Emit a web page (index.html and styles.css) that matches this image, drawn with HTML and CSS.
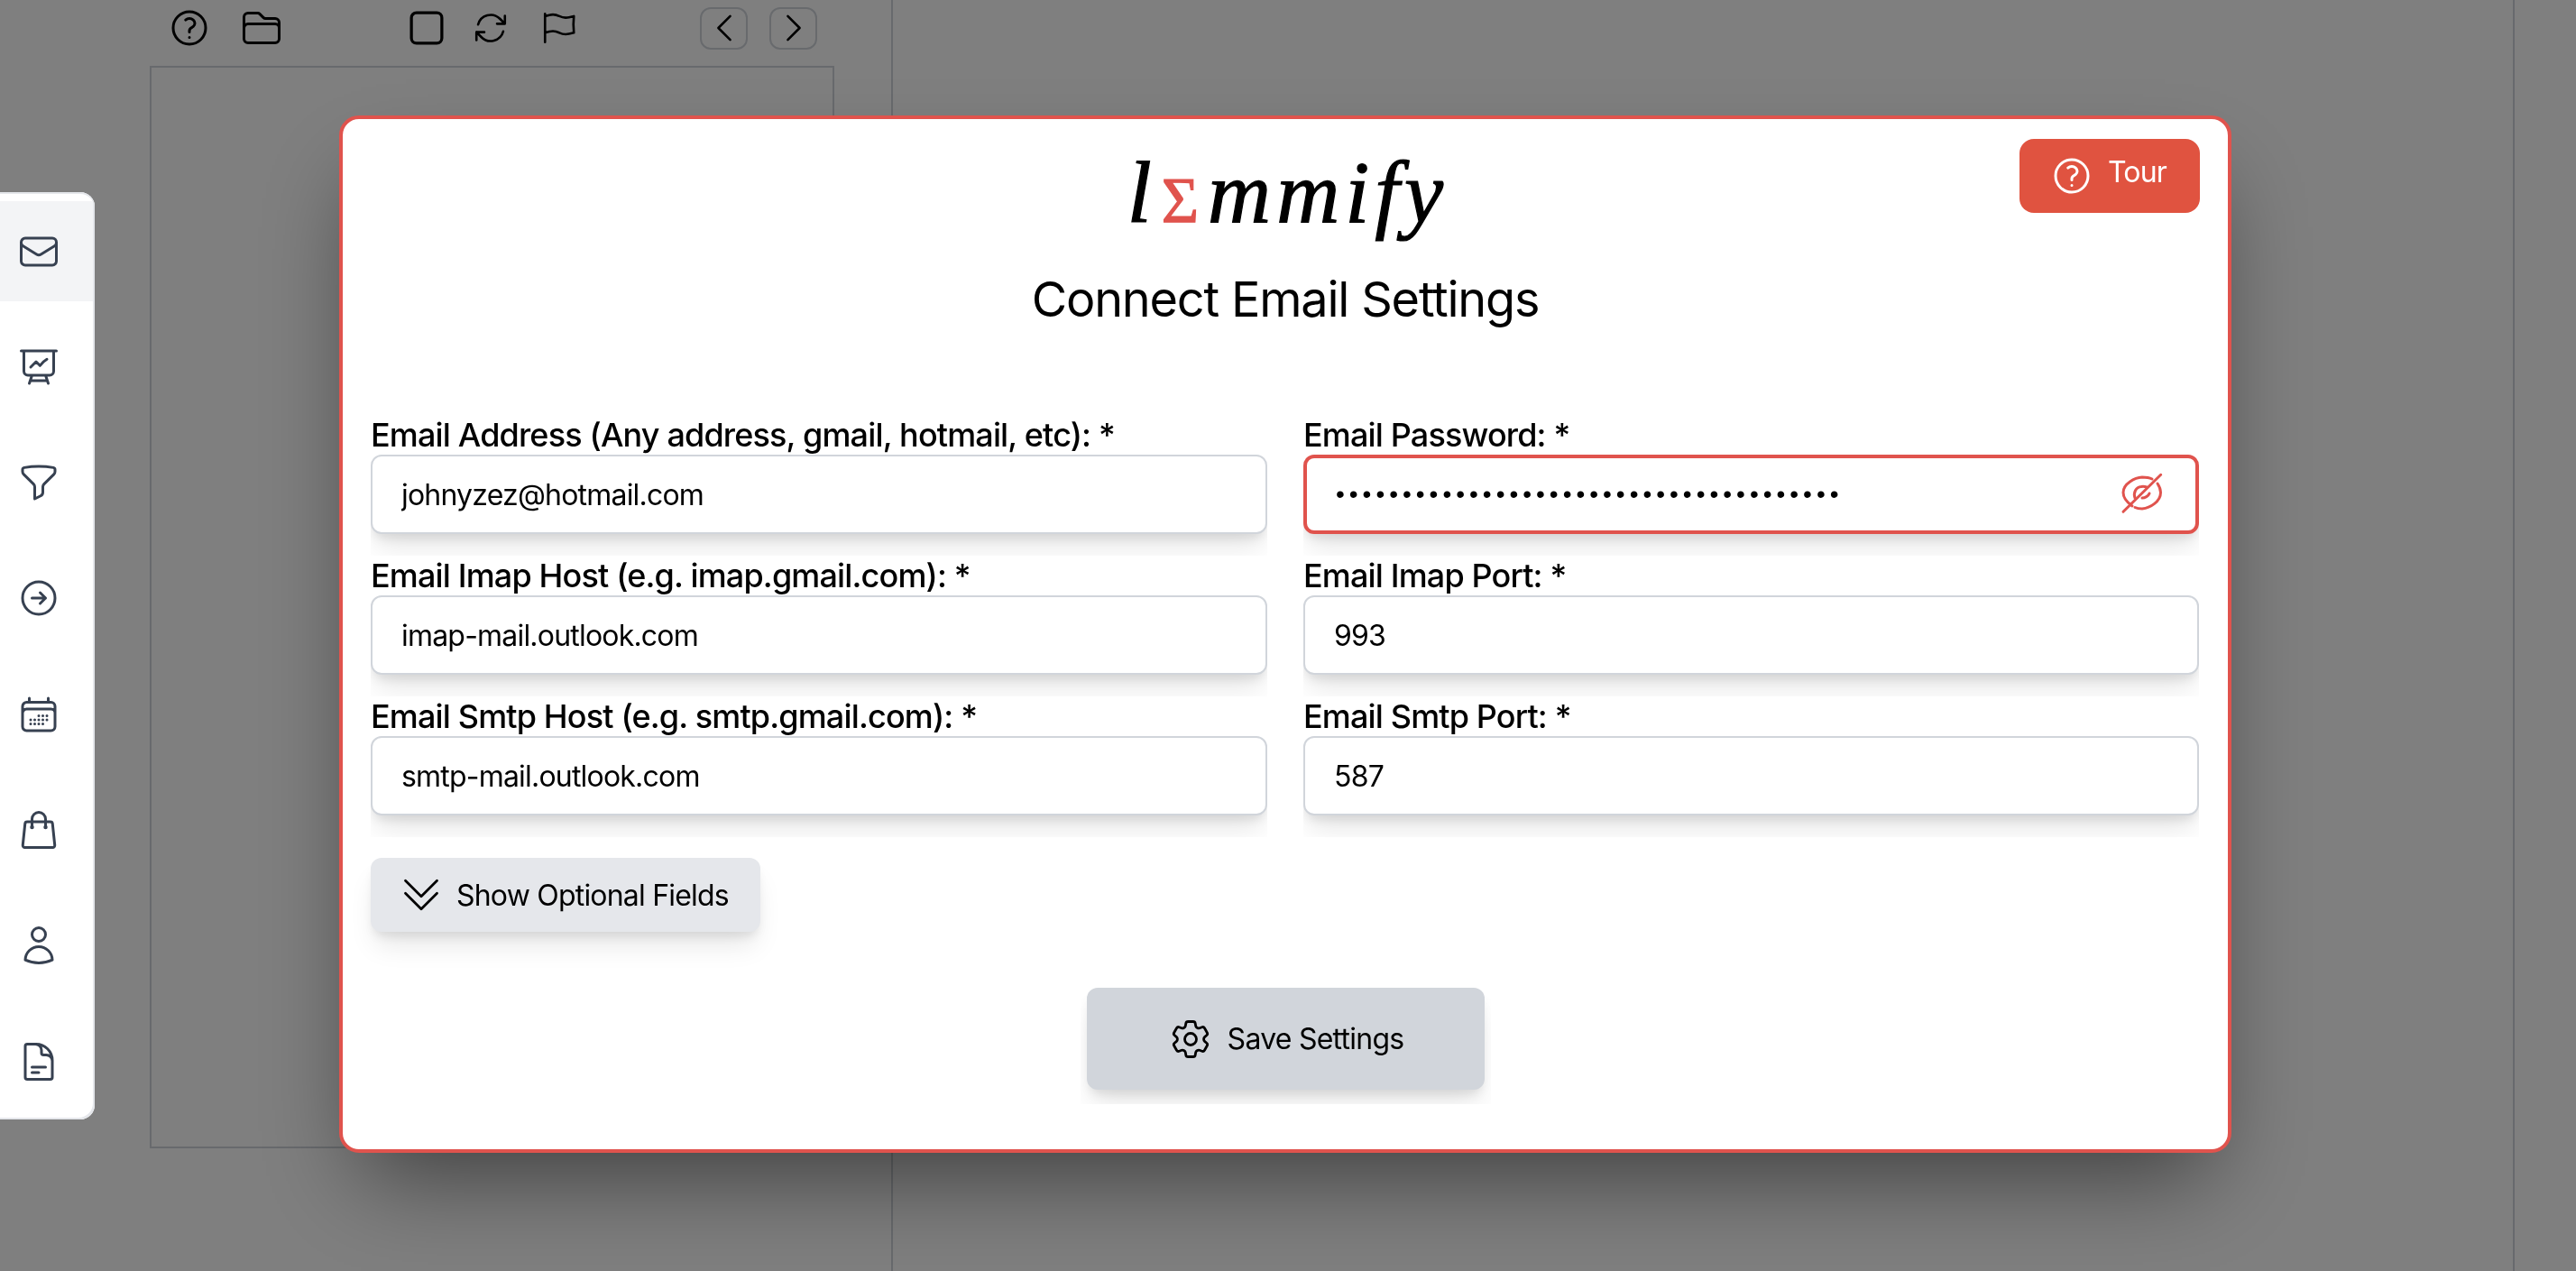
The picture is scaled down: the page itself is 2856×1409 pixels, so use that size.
FILE: index.html
```html
<!DOCTYPE html>
<html lang="en">
<head>
<meta charset="utf-8">
<title>Connect Email Settings</title>
<link rel="stylesheet" href="styles.css">
</head>
<body>
<svg class="defs" width="0" height="0" aria-hidden="true">
  <symbol id="i-help" viewBox="0 0 24 24"><path d="M9.879 7.519c1.171-1.025 3.071-1.025 4.242 0 1.172 1.025 1.172 2.687 0 3.712-.203.179-.43.326-.67.442-.745.361-1.45.999-1.45 1.827v.75M21 12a9 9 0 11-18 0 9 9 0 0118 0zm-9 5.25h.008v.008H12v-.008z"/></symbol>
</svg>
<div class="app">
  <section class="pane-left">
    <div class="toolbar">
      <div class="tool-group first">
        <svg class="ico tool"><use href="#i-help"/></svg>
        <svg class="ico tool" viewBox="0 0 24 24"><path d="M2.25 12.75V12A2.25 2.25 0 014.5 9.75h15A2.25 2.25 0 0121.75 12v.75m-8.69-6.44l-2.12-2.12a1.5 1.5 0 00-1.061-.44H4.5A2.25 2.25 0 002.25 6v12a2.25 2.25 0 002.25 2.25h15A2.25 2.25 0 0021.75 18V9a2.25 2.25 0 00-2.25-2.25h-5.379a1.5 1.5 0 01-1.06-.44z"/></svg>
      </div>
      <div class="tool-group second">
        <svg class="ico tool-stop" viewBox="0 0 24 24"><path d="M5.25 7.5A2.25 2.25 0 017.5 5.25h9a2.25 2.25 0 012.25 2.25v9a2.25 2.25 0 01-2.25 2.25h-9a2.25 2.25 0 01-2.25-2.25v-9z"/></svg>
        <svg class="ico tool-sm" viewBox="0 0 24 24"><path d="M16.023 9.348h4.992v-.001M2.985 19.644v-4.992m0 0h4.992m-4.993 0l3.181 3.183a8.25 8.25 0 0013.803-3.7M4.031 9.865a8.25 8.25 0 0113.803-3.7l3.181 3.182m0-4.991v4.99"/></svg>
        <svg class="ico tool-sm flag" viewBox="0 0 24 24"><path d="M3 3v1.5M3 21v-6m0 0l2.77-.693a9 9 0 016.208.682l.108.054a9 9 0 006.086.71l3.114-.732a48.524 48.524 0 01-.005-10.499l-3.11.732a9 9 0 01-6.085-.711l-.108-.054a9 9 0 00-6.208-.682L3 4.5M3 15V4.5"/></svg>
      </div>
      <div class="tool-group third">
        <button class="nav-btn"><svg class="ico nav" viewBox="0 0 24 24"><path d="M15.75 19.5L8.25 12l7.5-7.5"/></svg></button>
        <button class="nav-btn"><svg class="ico nav" viewBox="0 0 24 24"><path d="M8.25 4.5l7.5 7.5-7.5 7.5"/></svg></button>
      </div>
    </div>
    <div class="canvas"></div>
  </section>
  <section class="pane-center"></section>
  <section class="pane-right"></section>
</div>

<div class="overlay">
  <div class="modal">
    <button class="tour"><svg class="ico tour-ico"><use href="#i-help"/></svg><span>Tour</span></button>
    <div class="logo">l<span class="sigma">Σ</span>mmify</div>
    <h1 class="title">Connect Email Settings</h1>
    <form class="form">
      <div class="field">
        <label class="label" for="f1">Email Address (Any address, gmail, hotmail, etc): *</label>
        <input class="input" id="f1" type="text" value="johnyzez@hotmail.com">
      </div>
      <div class="field">
        <label class="label" for="f2">Email Password: *</label>
        <div class="pw-wrap">
          <input class="input pw" id="f2" type="password" value="12345678901234567890123456789012345678">
          <svg class="ico eye" viewBox="0 0 48 48"><path d="M13 38C6 33 3 28 3 23 3 13 16 6.500 24 6 28 6 32 6.500 35 8"/><path d="M41 13C43 16 44.500 20 44.500 23 44.500 33 33 40 24 41 21 41 18 40.500 16 39.500"/><path d="M16 29C14 23 17 17 23 16.500 25 16 27 16.300 29 17"/><path d="M24 29C27 29 31 27 32 24"/><path d="M3 44.300 44.700 3.300"/></svg>
        </div>
      </div>
      <div class="field">
        <label class="label" for="f3">Email Imap Host (e.g. imap.gmail.com): *</label>
        <input class="input" id="f3" type="text" value="imap-mail.outlook.com">
      </div>
      <div class="field">
        <label class="label" for="f4">Email Imap Port: *</label>
        <input class="input" id="f4" type="text" value="993">
      </div>
      <div class="field">
        <label class="label" for="f5">Email Smtp Host (e.g. smtp.gmail.com): *</label>
        <input class="input" id="f5" type="text" value="smtp-mail.outlook.com">
      </div>
      <div class="field">
        <label class="label" for="f6">Email Smtp Port: *</label>
        <input class="input" id="f6" type="text" value="587">
      </div>
    </form>
    <button class="btn-optional"><svg class="ico chev" viewBox="0 0 24 24"><path d="M19.5 5.250l-7.500 7.500-7.500-7.500m15 6l-7.500 7.500-7.500-7.500"/></svg><span>Show Optional Fields</span></button>
    <div class="save-row">
      <div class="save-clip">
      <button class="btn-save"><svg class="ico gear" viewBox="0 0 24 24"><path d="M9.594 3.940c.09-.542.56-.94 1.110-.94h2.593c.55 0 1.020.398 1.110.94l.213 1.281c.063.374.313.686.645.87.074.04.147.083.22.127.324.196.72.257 1.075.124l1.217-.456a1.125 1.125 0 011.370.49l1.296 2.247a1.125 1.125 0 01-.26 1.431l-1.003.827c-.293.24-.438.613-.431.992a6.759 6.759 0 010 .255c-.007.378.138.75.43.99l1.005.828c.424.35.534.954.26 1.430l-1.298 2.247a1.125 1.125 0 01-1.369.491l-1.217-.456c-.355-.133-.75-.072-1.076.124a6.570 6.570 0 01-.22.128c-.331.183-.581.495-.644.869l-.213 1.280c-.09.543-.56.941-1.110.941h-2.594c-.55 0-1.020-.398-1.110-.94l-.213-1.281c-.062-.374-.312-.686-.644-.87a6.520 6.520 0 01-.22-.127c-.325-.196-.72-.257-1.076-.124l-1.217.456a1.125 1.125 0 01-1.369-.49l-1.297-2.247a1.125 1.125 0 01.26-1.431l1.004-.827c.292-.24.437-.613.43-.992a6.932 6.932 0 010-.255c.007-.378-.138-.75-.43-.99l-1.004-.828a1.125 1.125 0 01-.26-1.430l1.297-2.247a1.125 1.125 0 011.370-.491l1.216.456c.356.133.751.072 1.076-.124.072-.044.146-.087.22-.128.332-.183.582-.495.644-.869l.214-1.281z"/><path d="M15 12a3 3 0 11-6 0 3 3 0 016 0z"/></svg><span>Save Settings</span></button>
      </div>
    </div>
  </div>
</div>

<nav class="sidebar">
  <a class="side-item active"><svg class="ico side" viewBox="0 0 24 24"><path d="M21.750 6.750v10.500a2.250 2.250 0 01-2.250 2.250h-15a2.250 2.250 0 01-2.250-2.250V6.750m19.500 0A2.250 2.250 0 0019.500 4.500h-15a2.250 2.250 0 00-2.250 2.250m19.500 0v.243a2.250 2.250 0 01-1.070 1.916l-7.500 4.615a2.250 2.250 0 01-2.360 0L3.320 8.910a2.250 2.250 0 01-1.070-1.916V6.750"/></svg></a>
  <a class="side-item"><svg class="ico side" viewBox="0 0 24 24"><path d="M3.750 3v11.250A2.250 2.250 0 006 16.500h2.250M3.750 3h-1.500m1.500 0h16.500m0 0h1.500m-1.500 0v11.250A2.250 2.250 0 0118 16.500h-2.250m-7.500 0h7.500m-7.500 0l-1 3m8.500-3l1 3m0 0l.5 1.500m-.5-1.500h-9.500m0 0l-.5 1.500m.75-9l3-3 2.148 2.148A12.061 12.061 0 0116.500 7.605"/></svg></a>
  <a class="side-item"><svg class="ico side" viewBox="0 0 24 24"><path d="M12 3c2.755 0 5.455.232 8.083.678.533.09.917.556.917 1.096v1.044a2.250 2.250 0 01-.659 1.591l-5.432 5.432a2.250 2.250 0 00-.659 1.591v2.927a2.250 2.250 0 01-1.244 2.013L9.750 21v-6.568a2.250 2.250 0 00-.659-1.591L3.659 7.409A2.250 2.250 0 013 5.818V4.774c0-.54.384-1.006.917-1.096A48.320 48.320 0 0112 3z"/></svg></a>
  <a class="side-item"><svg class="ico side" viewBox="0 0 24 24"><path d="M12.750 15l3-3m0 0l-3-3m3 3h-7.500M21 12a9 9 0 11-18 0 9 9 0 0118 0z"/></svg></a>
  <a class="side-item"><svg class="ico side" viewBox="0 0 24 24"><path d="M6.750 3v2.250M17.250 3v2.250M3 18.750V7.500a2.250 2.250 0 012.250-2.250h13.500A2.250 2.250 0 0121 7.500v11.250m-18 0A2.250 2.250 0 005.250 21h13.500A2.250 2.250 0 0021 18.750m-18 0v-7.500A2.250 2.250 0 015.250 9h13.500A2.250 2.250 0 0121 11.250v7.500m-9-6h.008v.008H12v-.008zM12 15h.008v.008H12V15zm0 2.250h.008v.008H12v-.008zM9.750 15h.008v.008H9.750V15zm0 2.250h.008v.008H9.750v-.008zM7.500 15h.008v.008H7.500V15zm0 2.250h.008v.008H7.500v-.008zm6.750-4.500h.008v.008h-.008v-.008zm0 2.250h.008v.008h-.008V15zm0 2.250h.008v.008h-.008v-.008zm2.250-4.500h.008v.008H16.500v-.008zm0 2.250h.008v.008H16.500V15z"/></svg></a>
  <a class="side-item"><svg class="ico side" viewBox="0 0 24 24"><path d="M15.750 10.500V6a3.750 3.750 0 10-7.500 0v4.500m11.356-1.993l1.263 12c.07.665-.45 1.243-1.119 1.243H4.250a1.125 1.125 0 01-1.120-1.243l1.264-12A1.125 1.125 0 015.513 7.500h12.974c.576 0 1.059.435 1.119 1.007zM8.625 10.500a.375.375 0 11-.75 0 .375.375 0 01.75 0zm7.500 0a.375.375 0 11-.75 0 .375.375 0 01.75 0z"/></svg></a>
  <a class="side-item"><svg class="ico side" viewBox="0 0 24 24"><path d="M15.750 6a3.750 3.750 0 11-7.500 0 3.750 3.750 0 017.500 0zM4.501 20.118a7.500 7.500 0 0114.998 0A17.933 17.933 0 0112 21.750c-2.676 0-5.216-.584-7.499-1.632z"/></svg></a>
  <a class="side-item"><svg class="ico side" viewBox="0 0 24 24"><path d="M19.500 14.250v-2.625a3.375 3.375 0 00-3.375-3.375h-1.500A1.125 1.125 0 0113.500 7.125v-1.500a3.375 3.375 0 00-3.375-3.375H8.250m0 12.750h7.500m-7.500 3H12M10.500 2.250H5.625c-.621 0-1.125.504-1.125 1.125v17.250c0 .621.504 1.125 1.125 1.125h12.750c.621 0 1.125-.504 1.125-1.125V11.250a9 9 0 00-9-9z"/></svg></a>
</nav>
</body>
</html>
```

FILE: styles.css
```css
* { box-sizing: border-box; }
html, body { margin: 0; height: 100%; overflow: hidden; }
body { background: #fff; font-family: Inter, "Liberation Sans", sans-serif; color: #000; }
.defs { position: absolute; }
.ico { fill: none; stroke: currentColor; stroke-width: 1.5; stroke-linecap: round; stroke-linejoin: round; display: block; flex: none; }

.app { display: flex; height: 100vh; }
.pane-left { width: 990px; border-right: 2px solid #d1d5db; padding-left: 166px; }
.pane-center { flex: 1; border-right: 2px solid #d1d5db; }
.pane-right { width: 68px; }

.toolbar { display: flex; align-items: center; height: 62px; width: 758px; }
.tool-group { display: flex; align-items: center; }
.tool { width: 48px; height: 48px; color: #000; }
.tool-stop { width: 60px; height: 60px; color: #000; stroke-width: 1.3; }
.tool-sm { width: 42px; height: 42px; color: #000; stroke-width: 1.5; }
.first { margin-left: 20px; gap: 32px; }
.second { margin-left: 129px; gap: 20px; }
.flag { margin-left: 14px; }
.third { margin-left: 135px; gap: 24px; }
.nav-btn { width: 53px; height: 47px; padding: 0; border: 2px solid #d1d5db; border-radius: 12px; background: transparent; display: flex; align-items: center; justify-content: center; color: #000; }
.nav { width: 42px; height: 42px; flex: none; }
.canvas { margin-top: 11px; width: 759px; height: 1200px; border: 2px solid #d1d5db; }

.overlay { position: fixed; inset: 0; background: rgba(0,0,0,.5); display: flex; align-items: center; justify-content: center; padding-right: 6px; padding-bottom: 3px; }
.modal { position: relative; width: 2098px; height: 1150px; background: #fff; border: 4px solid #e0534d; border-radius: 22px; padding: 0 31px 0 31px; box-shadow: 0 50px 100px -24px rgba(0,0,0,.5); }
.tour { position: absolute; top: 22px; right: 31px; width: 200px; height: 82px; border: 0; border-radius: 16px; background: #e05340; color: #fff; display: flex; align-items: center; gap: 16px; padding: 0 34px; font: 400 32px/1 Inter, sans-serif; letter-spacing: -.8px; }
.tour span { position: relative; top: -4px; }
.tour-ico { width: 48px; height: 48px; }

.logo { text-align: center; font-family: "Liberation Serif", serif; font-style: italic; font-size: 97px; line-height: 100px; padding-top: 32px; padding-left: 6px; height: 148px; color: #000; letter-spacing: 6px; -webkit-text-stroke: 1.2px #000; }
.sigma { color: #e0534d; font-style: normal; font-weight: 400; font-size: 71px; margin: 0 10px 0 5px; letter-spacing: 0; -webkit-text-stroke: 1.2px #e0534d; }
.title { text-align: center; font-weight: 400; font-size: 54px; letter-spacing: -1.2px; line-height: 80px; height: 80px; margin: 12px 0 0; }

.form { display: grid; grid-template-columns: 994px 993px; column-gap: 40px; margin-top: 88px; }
.field { display: flex; flex-direction: column; overflow: hidden; padding-bottom: 24px; }
.label { font-size: 36px; font-weight: 500; letter-spacing: -.85px; line-height: 44px; height: 44px; }
.input { width: 100%; height: 88px; flex: none; border: 2px solid #d1d5db; border-radius: 12px; padding: 0 32px; font: 400 32px Inter, sans-serif; letter-spacing: -.8px; color: #000; background: #fff; outline: 0; box-shadow: 0 20px 30px -6px rgba(0,0,0,.1), 0 8px 12px -4px rgba(0,0,0,.1); }
.pw-wrap { position: relative; }
.pw { border: 4px solid #e0534d; padding: 0 30px 0 32px; font-family: "Liberation Sans", sans-serif; font-size: 28px; letter-spacing: 5px; }
.eye { position: absolute; right: 39px; top: 19px; width: 48px; height: 48px; color: #e0534d; stroke-width: 3; }

.btn-optional { display: flex; align-items: center; gap: 11px; width: 432px; height: 82px; margin-top: 23px; padding: 0 28px; border: 0; border-radius: 12px; background: #e5e7eb; font: 400 32px Inter, sans-serif; letter-spacing: -.8px; color: #000; box-shadow: 0 20px 30px -6px rgba(0,0,0,.1), 0 8px 12px -4px rgba(0,0,0,.1); }
.chev { width: 56px; height: 56px; stroke-width: 1.2; }
.save-row { display: flex; justify-content: center; margin-top: 62px; }
.save-clip { overflow: hidden; padding: 0 7px 16px; }
.btn-save { display: flex; align-items: center; justify-content: center; gap: 15px; width: 441px; height: 113px; border: 0; border-radius: 12px; background: #d1d5db; font: 400 32px Inter, sans-serif; letter-spacing: -.75px; color: #000; box-shadow: 0 20px 30px -6px rgba(0,0,0,.1), 0 8px 12px -4px rgba(0,0,0,.1); }
.gear { width: 52px; height: 52px; stroke-width: 1.3; }

.sidebar { position: fixed; left: 0; top: 213px; width: 105px; height: 1028px; background: #fff; border-radius: 0 16px 16px 0; padding-top: 10px; display: flex; flex-direction: column; gap: 17.3px; box-shadow: inset -2px -2px 0 #e5e7eb, inset 0 2px 0 #e5e7eb; }
.side-item { height: 111px; display: flex; align-items: center; justify-content: center; padding-right: 17px; margin-right: 2px; color: #374151; }
.side-item.active { background: #f3f4f6; }
.side { width: 48px; height: 48px; }
```
